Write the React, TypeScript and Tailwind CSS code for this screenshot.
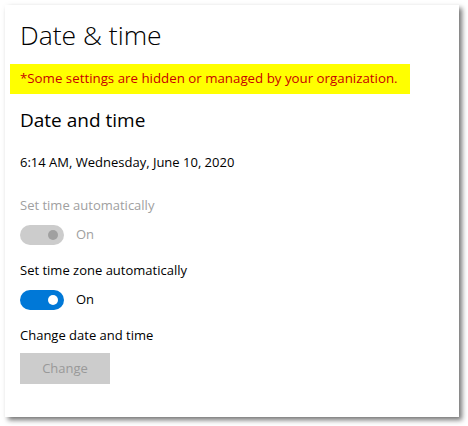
export default function App() {
  return (
    <div className="h-[426px] w-[468px] bg-white pl-[5px] pt-[5px] font-['Segoe_UI','Open_Sans',sans-serif] text-black">
      <div className="h-[412px] w-[454px] bg-white pl-[15px] pt-[11px] shadow-[3px_3px_5px_rgba(0,0,0,0.55)]">
        <div className="flex h-[38px] items-center text-[26.5px] font-light leading-none">
          Date &amp; time
        </div>

        <div className="-ml-[10px] mt-[10px] flex h-[30px] w-[400px] items-center bg-[#ffff00] pl-[10px] text-[13.3px] text-[#c80000]">
          *Some settings are hidden or managed by your organization.
        </div>

        <div className="mt-[12px] flex h-[28px] items-center text-[19px] leading-none">
          Date and time
        </div>

        <div className="mt-[19px] flex h-[20px] items-center text-[13px]">
          6:14 AM, Wednesday, June 10, 2020
        </div>

        <div className="mt-[23px] flex h-[20px] items-center text-[13px] text-[#a0a0a0]">
          Set time automatically
        </div>
        <div className="mt-[9px] flex h-[20px] items-center gap-[12px]">
          <div className="flex h-[20px] w-[44px] items-center justify-end rounded-full bg-[#cccccc] pr-[6px]">
            <div className="h-[10px] w-[10px] rounded-full bg-[#a0a0a0]" />
          </div>
          <span className="text-[13px] text-[#a0a0a0]">On</span>
        </div>

        <div className="mt-[16px] flex h-[20px] items-center text-[13px]">
          Set time zone automatically
        </div>
        <div className="mt-[9px] flex h-[20px] items-center gap-[12px]">
          <div className="flex h-[20px] w-[44px] items-center justify-end rounded-full bg-[#0078d7] pr-[6px]">
            <div className="h-[10px] w-[10px] rounded-full bg-white" />
          </div>
          <span className="text-[13px]">On</span>
        </div>

        <div className="mt-[16px] flex h-[20px] items-center text-[13px]">
          Change date and time
        </div>
        <button className="mt-[7px] flex h-[31px] w-[90px] items-center justify-center bg-[#cccccc] text-[13px] text-[#999999]">
          Change
        </button>
      </div>
    </div>
  );
}
